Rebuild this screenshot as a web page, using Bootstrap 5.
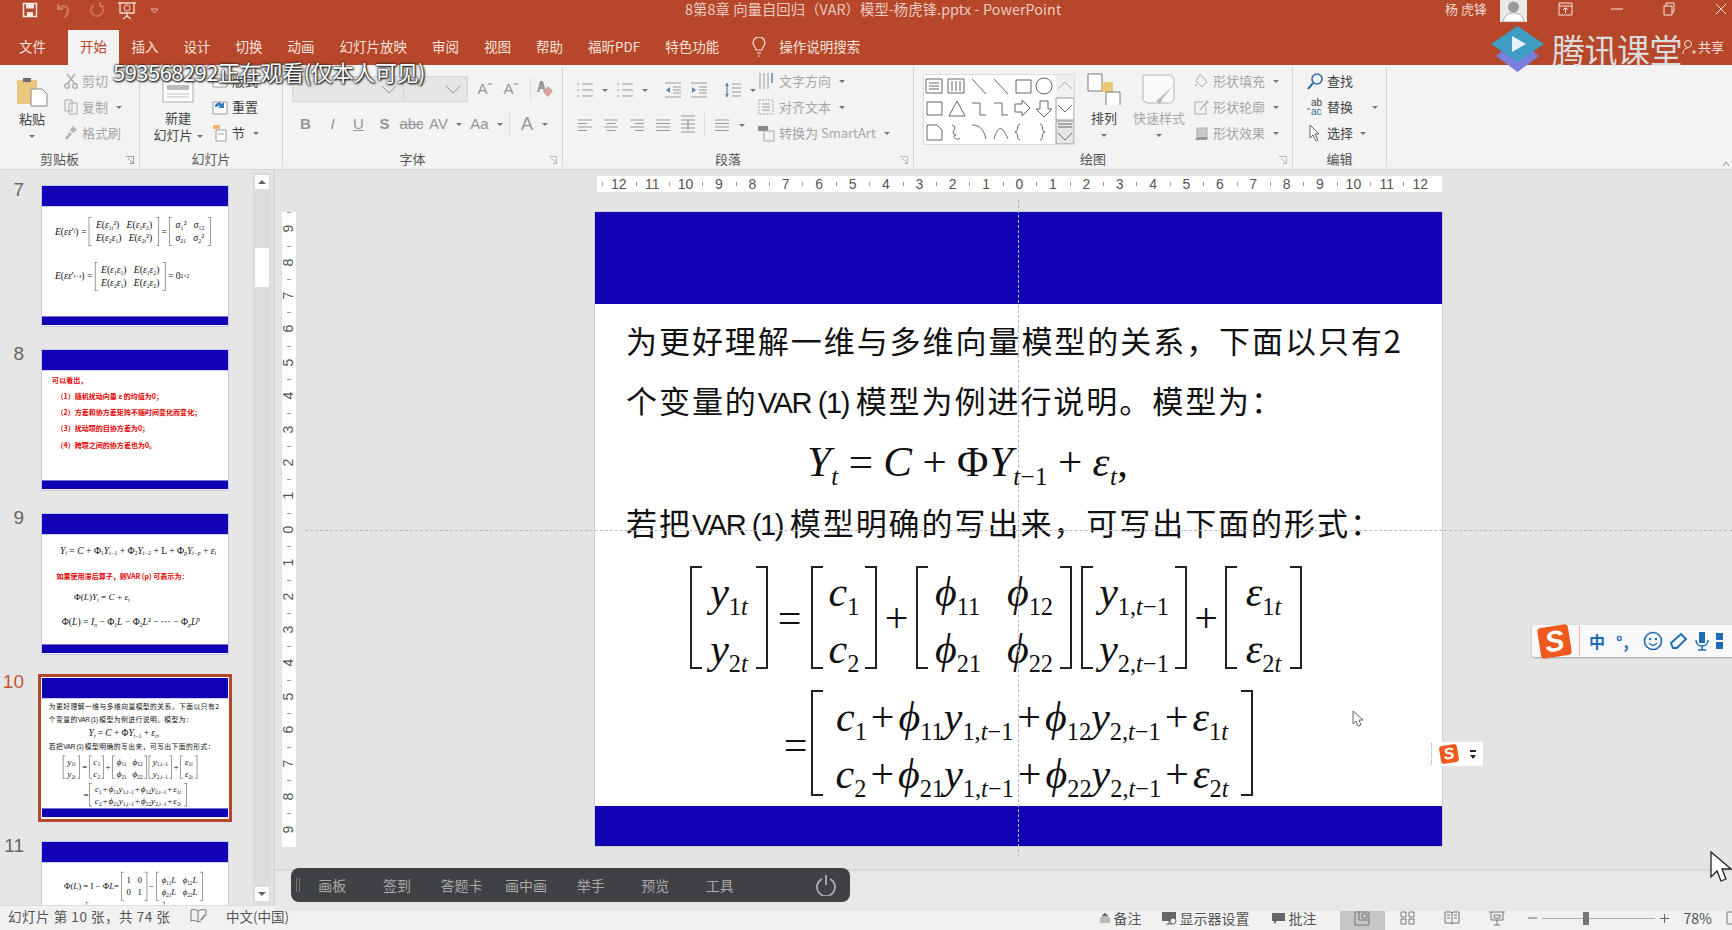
<!DOCTYPE html>
<html lang="zh-CN">
<head>
<meta charset="UTF-8">
<title>PowerPoint</title>
<link href="https://cdn.jsdelivr.net/npm/bootstrap@5.3.0/dist/css/bootstrap.min.css" rel="stylesheet">
<style>
html,body{margin:0;width:1732px;height:930px;overflow:hidden;}
body{position:relative;background:#e4e4e4;color:#444;font-family:"Noto Sans CJK SC","Liberation Sans",sans-serif;font-size:13px;}
svg{display:block;flex:none;}
/* title + tabs */
.app-head{height:65px;background:#b7472a;color:#f0d9d2;position:relative;z-index:5;}
.title-row{height:33px;}
.qa{width:685px;padding:2px 0 0 22px;gap:0;}
.qa-i1{margin-right:17px}.qa-i2{margin-right:16px}.qa-i3{margin-right:11px}.qa-i4{margin-right:13px}
.doc-title{font-size:14.3px;line-height:17px;color:#ecccc3;letter-spacing:.1px;}
.win-ctl{margin-left:auto;margin-right:-15px;}
.who{font-size:13px;line-height:18px;margin-right:13px;color:#f0d9d2;}
.avatar{width:27px;height:22px;background:#e9e9e9;margin-right:12px;}
.wbtn{width:52px;height:18px;display:flex;justify-content:center;align-items:center;}
.tab-row{height:32px;}
.rtab{padding:0 12.5px;line-height:27px;height:27px;font-size:13.5px;color:#f4e3de;white-space:nowrap;}
.rtab-file{padding:0 22px 0 19px;}
.rtab-on{background:#f3f3f3;color:#b7472a;padding:0 12px;height:35px;margin-top:-3px;line-height:33px;}
.rtab-tell{margin-left:8px;}
.tell-txt{padding-left:13px;}
.share{position:absolute;right:8px;top:37px;gap:2px;font-size:13px;line-height:20px;color:#f3e2dd;}
.tencent{position:absolute;left:1491px;top:26px;gap:8px;}
.tencent-name{font-size:33px;line-height:38px;color:#dcdcdc;letter-spacing:-.5px;white-space:nowrap;}
.watch{position:absolute;left:113px;top:56px;font-size:22px;line-height:30px;color:#fff;text-shadow:0 0 2px #111,1px 1px 2px #111,0 0 3px #333;letter-spacing:-.55px;white-space:nowrap;}
/* ribbon */
.ribbon{height:105px;background:#f3f3f3;border-bottom:1px solid #d4d4d4;}
.rb-grp{position:relative;border-right:1px solid #d5d5d5;height:100px;margin-top:2px;display:flex;flex-direction:column;}
.rb-body{height:84px;padding-top:1px;display:flex;}
.rb-lab{height:16px;line-height:16px;text-align:center;font-size:13px;color:#555;position:relative;}
.lab-off{padding-right:20px;}
.launch{position:absolute;right:5px;top:5px;}
.w-clip{width:140px}.w-slide{width:143px}.w-font{width:280px}.w-para{width:351px}.w-draw{width:379px}.w-edit{width:94px}
.rb-big{display:flex;flex-direction:column;align-items:center;text-align:center;line-height:17px;color:#444;}
.big-paste{width:64px;padding-top:7px;}
.big-new{width:68px;padding:11px 0 0 0;margin-left:4px;}
.big-arr{width:52px;padding-top:5px;margin-left:3px;}
.big-quick{width:58px;padding-top:6px;color:#aaa;}
.top-paste{margin-top:3px;}
.top-new{margin-top:6px;}
.top-arr{margin-top:4px;}
.top-quick{margin-top:3px;}
.rb-sm{height:26px;display:flex;align-items:center;gap:4px;white-space:nowrap;line-height:26px;color:#444;}
.off{color:#a6a6a6;}
.caret-d{display:inline-block;width:0;height:0;border-left:3px solid transparent;border-right:3px solid transparent;border-top:3px solid #777;margin-left:4px;vertical-align:middle;}
.font-wrap{padding:9px 0 0 9px;display:block;}
.combo-a,.combo-b{height:26px;background:#e6e6e6;border:1px solid #d5d5d5;display:flex;align-items:center;justify-content:flex-end;padding-right:6px;}
.combo-a{width:112px}.combo-b{width:64px;border-left:0;margin-right:4px;}
.font-row{height:26px;display:flex;align-items:center;}
.row-gap{margin-top:9px;}
.ftool{color:#959595;font-family:"Liberation Sans",sans-serif;font-size:15px;line-height:26px;text-align:center;}
.ft-a{width:26px}.ft-b{width:27px}.ft-c{width:25px}.ft-d{width:22px;font-size:18px}
.ft-sep{width:1px;height:24px;background:#ddd;margin:0 6px;}
.para-l{width:190px;padding:9px 0 0 13px;}
.para-r{padding-left:4px;}
.gap-ic{gap:8px;}
.gallery{width:152px;height:71px;margin:6px 0 0 9px;background:#fff;border:1px solid #dcdcdc;}
.fill-col{padding-left:6px;}
.edit-col{padding-left:13px;}
.edit-col .rb-sm{gap:3px;}
.collapse-mark{margin:auto 3px 3px auto;}
/* work area */
.work{height:735px;}
.side{width:275px;height:735px;border-right:2px solid #d7d7d7;background:#e6e6e6;overflow:hidden;}
.th-col{width:253px;padding-top:16px;overflow:hidden;}
.th-row{display:flex;height:164px;}
.th-num{width:42px;padding:0 18px 0 0;margin-top:-6px;text-align:right;font-size:19px;line-height:20px;color:#666;font-family:"Liberation Sans",sans-serif;}
.th-now .th-num{color:#c4583c;}
.th-box{width:186px;height:140px;overflow:hidden;background:#fff;box-shadow:0 0 0 1px #c9c9f0;}
.th-now .th-box{box-shadow:0 0 0 1px #fff,0 0 0 4px #b5472d;}
.th-in{width:847px;height:634px;transform:scale(.2196);transform-origin:0 0;}
.sbar{width:18px;background:#dcdcdc;margin:2px 0 0;display:flex;flex-direction:column;align-items:center;}
.sb-btn{width:16px;height:16px;margin-top:2px;background:#fff;border:1px solid #ddd;display:flex;align-items:center;justify-content:center;}
.sb-up{border-left:4px solid transparent;border-right:4px solid transparent;border-bottom:4px solid #666;}
.sb-down{border-left:4px solid transparent;border-right:4px solid transparent;border-top:4px solid #666;}
.sb-thumb{width:16px;height:41px;margin-top:57px;background:#fff;border:1px solid #ddd;}
.sb-dn{margin-top:auto;margin-bottom:3px;}
.edit-pane{flex:1;position:relative;}
.canvas{height:693px;}
.ruler-top{height:16px;margin:6px 0 0 322px;width:845px;background:#fff;display:flex;justify-content:center;}
.rcell{width:33.4px;height:16px;position:relative;text-align:center;font-family:"Liberation Sans",sans-serif;font-size:14px;line-height:16px;color:#555;flex:none;}
.rcell::before{content:"";position:absolute;left:0;top:6px;height:4px;width:1px;background:#999;}
.canvas-row{display:flex;margin-top:20px;}
.ruler-left{width:14px;margin-left:7px;height:635px;background:#fff;display:flex;flex-direction:column;justify-content:center;}
.vcell{height:33.4px;width:14px;position:relative;text-align:center;font-family:"Liberation Sans",sans-serif;font-size:14px;line-height:33.4px;color:#555;flex:none;}
.vcell span{display:block;transform:rotate(-90deg);}
.vcell::before{content:"";position:absolute;left:5px;top:0;width:4px;height:1px;background:#999;}
.slide-big{width:847px;height:634px;margin-left:299px;box-shadow:0 0 0 1px #cfcfcf;}
.notes{height:42px;border-top:2px solid #d7d7d7;background:#e8e8e8;}
/* slide */
.sld{background:#fff;color:#111;display:flex;flex-direction:column;width:847px;height:634px;overflow:hidden;}
.band-t{height:92px;background:#1100b4;flex:none;}
.band-b{height:40px;background:#1100b4;margin-top:auto;flex:none;}
.ttl{font-family:"Noto Sans CJK SC","Liberation Sans",sans-serif;font-size:31px;letter-spacing:1.95px;line-height:60px;height:60px;padding-left:31px;white-space:nowrap;}
.ttl-first{margin-top:6px;}
.ttl-var{font-family:"Liberation Sans",sans-serif;font-size:29px;letter-spacing:-1.4px;}
.mth{font-family:"Liberation Serif",serif;font-size:42px;line-height:1;white-space:nowrap;}
.mth i{font-style:italic;}
.sb{font-size:.58em;vertical-align:-.35em;line-height:0;}
.eq1{height:62px;padding-left:212px;display:flex;align-items:center;font-size:43px;letter-spacing:.4px;}
.eq1 .sp{padding:0 10px;}
.mrow{display:flex;align-items:stretch;}
.mrow-a{height:103px;margin:14px 0 0 95px;}
.mrow-b{height:106px;margin:21px 0 0 185px;}
.mrow-a .brk,.mrow-b .brk{padding-top:6px;}
.opr{display:flex;align-items:center;justify-content:center;}
.op-eq{width:43px}.op-pl{width:39px}.op-no{width:9px}.op-pl2{width:38px}.op-eq2{width:31px;padding-top:4px;}
.brk{position:relative;display:flex;flex-direction:column;justify-content:center;align-items:center;}
.brk>div{line-height:57px;}
.brk::before,.brk::after{content:"";position:absolute;top:0;bottom:0;width:12px;border:2px solid #222;}
.brk::before{left:0;border-right:0;}
.brk::after{right:0;border-left:0;}
.br-a{width:78px}.br-b{width:66px}.br-c{width:156px}.br-d{width:106px}.br-e{width:77px}.br-f{width:442px;}
.br-g{width:360px;height:130px;}
.two{display:flex;justify-content:space-between;width:118px;}
.pls{padding:0 4px;}
/* small thumb slides */
.t7a{margin:50px 0 0 59px;height:130px;font-size:44px;}
.t7b{margin:74px 0 0 59px;height:130px;font-size:44px;}
.t-red{color:#e60000;font-weight:700;font-size:32px;line-height:73px;white-space:nowrap;}
.t8a{margin:10px 0 0 46px;height:73px;}
.t8b{padding-left:66px;height:73px;}
.t9a{margin:52px 0 0 82px;height:56px;font-size:44px;}
.t9b{margin:58px 0 0 66px;}
.t9c{margin:50px 0 0 146px;font-size:42px;}
.t9d{margin:72px 0 0 90px;font-size:44px;}
.t11a{margin:44px 0 0 100px;font-size:40px;height:130px;}
.t11b{margin:7px 0 0 200px;}
/* status */
.status{height:25px;background:#f1f1f1;border-top:1px solid #dcdcdc;color:#555;line-height:20px;font-size:13.5px;}
.st-left{padding-left:8px;width:190px;white-space:nowrap;letter-spacing:.55px;}
.st-icon{margin-top:3px;}
.st-lang{margin-left:19px;font-size:13.5px;}
.st-right{margin-left:auto;margin-right:-8px;height:24px;font-size:14px;}
.st-item{gap:3px;white-space:nowrap;}
.st-note{margin-right:19px;}
.st-disp{margin-right:21px;}
.st-cmt{margin-right:23px;}
.vw{width:45px;height:24px;display:flex;align-items:center;justify-content:center;}
.vw-on{background:#c6c6c6;}
.zoom-minus{margin-left:8px;}
.zoom-track{width:113px;height:1px;background:#aaa;margin:0 5px;position:relative;}
.zoom-thumb{position:absolute;left:41px;top:-6px;width:6px;height:13px;background:#777;}
.zoom-val{margin:0 14px 0 15px;font-size:14px;}
/* overlays */
.guide-v{position:absolute;left:1018px;top:200px;height:657px;border-left:1px dashed #b9b9b9;}
.guide-h{position:absolute;left:305px;right:0;top:530px;border-top:1px dashed #b9b9b9;}
.class-bar{position:absolute;left:291px;top:868px;width:559px;height:34px;background:#3f4144;border-radius:8px;color:#a9a9a9;font-size:14px;}
.cb-grip{width:4px;height:14px;border-left:1px solid #777;border-right:1px solid #777;margin:0 0 0 5px;}
.cb-it{width:64.6px;text-align:center;line-height:34px;flex:none;}
.cb-pow{margin-left:auto;margin-right:13px;}
.ime{position:absolute;left:1532px;top:625px;width:210px;height:32px;background:#f8f9fb;border-radius:3px 0 0 3px;box-shadow:0 1px 2px #9aa4b4;padding-left:7px;color:#1c6cb5;}
.sg-logo{display:flex;align-items:center;justify-content:center;background:#ef5a1c;color:#fff;font-family:"Liberation Sans",sans-serif;font-weight:700;font-style:italic;transform:rotate(-9deg);}
.sg-big{width:31px;height:31px;border-radius:4px;font-size:29px;margin-right:9px;}
.sg-sm{width:18px;height:18px;border-radius:3px;font-size:16px;}
.ime-sep{width:1px;height:30px;background:#f4b8a0;margin-right:9px;}
.ime-zh{font-size:16px;font-weight:700;width:27px;line-height:32px;}
.ime-dot{font-size:16px;font-weight:700;width:27px;line-height:24px;letter-spacing:1px;}
.ime-i{margin-right:7px;}
.ime-sm{position:absolute;left:1425px;top:742px;width:58px;height:24px;background:#fff;padding-left:15px;gap:12px;}
.ime-sm-grip{position:absolute;left:6px;top:1px;height:22px;border-left:1px dotted #aaa;}
.updn{width:6px;}
.updn b{display:block;width:6px;height:2px;background:#222;margin-bottom:3px;}
.updn u{display:block;width:0;height:0;border-left:3px solid transparent;border-right:3px solid transparent;border-top:4px solid #222;}
.cur-a{position:absolute;left:1352px;top:710px;}
.cur-b{position:absolute;left:1710px;top:851px;}
</style>
</head>
<body>
<svg width="0" height="0" class="position-absolute">
  <symbol id="l-bul" viewBox="0 0 18 18"><g fill="none" stroke="#999" stroke-width="1.2"><path d="M6 3h11M6 9h11M6 15h11M1 3h2M1 9h2M1 15h2"/></g></symbol>
  <symbol id="l-ind-l" viewBox="0 0 18 18"><g fill="none" stroke="#999" stroke-width="1.2"><path d="M1 2h16M9 6h8M9 9h8M9 12h8M1 16h16"/></g><path d="M6 6v6L2 9z" fill="#5b86b5"/></symbol>
  <symbol id="l-ind-r" viewBox="0 0 18 18"><g fill="none" stroke="#999" stroke-width="1.2"><path d="M1 2h16M9 6h8M9 9h8M9 12h8M1 16h16"/></g><path d="M2 6v6l4-3z" fill="#5b86b5"/></symbol>
  <symbol id="l-sp" viewBox="0 0 18 18"><g fill="none" stroke="#999" stroke-width="1.2"><path d="M8 3h9M8 7h9M8 11h9M8 15h9"/><path d="M3 2v14" stroke="#5b86b5"/></g><path d="M1 5l2-3 2 3zM1 13l2 3 2-3z" fill="#5b86b5"/></symbol>
  <symbol id="a-l" viewBox="0 0 16 14"><path d="M1 2h14M1 5.500h9M1 9h14M1 12.500h9" stroke="#999" stroke-width="1.100"/></symbol>
  <symbol id="a-c" viewBox="0 0 16 14"><path d="M1 2h14M3.500 5.500h9M1 9h14M3.500 12.500h9" stroke="#999" stroke-width="1.100"/></symbol>
  <symbol id="a-r" viewBox="0 0 16 14"><path d="M1 2h14M6 5.500h9M1 9h14M6 12.500h9" stroke="#999" stroke-width="1.100"/></symbol>
  <symbol id="a-j" viewBox="0 0 16 14"><path d="M1 2h14M1 5.500h14M1 9h14M1 12.500h14" stroke="#999" stroke-width="1.100"/></symbol>
  <symbol id="a-d" viewBox="0 0 16 20"><path d="M1 1h14M1 5h14M1 9h14M1 13h14M1 17h14" stroke="#999" stroke-width="1.100"/><path d="M8 5v10" stroke="#888"/></symbol>
</svg>

<div class="app-head">
  <div class="title-row d-flex">
    <div class="qa d-flex">
      <svg class="qa-i1" width="16" height="16" viewBox="0 0 16 16"><path d="M1.500 1.500h13v13h-13z" fill="none" stroke="#f3e6e2" stroke-width="1.500"/><path d="M4 1.500h8v5H4zM5 10h6v4.500H5z" fill="#f3e6e2"/></svg>
      <svg class="qa-i2" width="17" height="16" viewBox="0 0 17 16"><path d="M3 7c3-4 10-4 10 2 0 3-2 5-4 6M3 2v5h5" fill="none" stroke="#cf7a62" stroke-width="2"/></svg>
      <svg class="qa-i3" width="18" height="16" viewBox="0 0 18 16"><path d="M12 3a6 6 0 1 1-6 0M12 0v4h4" fill="none" stroke="#cf7a62" stroke-width="1.600"/></svg>
      <svg class="qa-i4" width="20" height="18" viewBox="0 0 20 18"><path d="M1 1h18M3 1v10h14V1M10 11v3M6 17l4-3 4 3" fill="none" stroke="#f0d9d2" stroke-width="1.300"/><circle cx="10" cy="6" r="3" fill="none" stroke="#f0d9d2"/></svg>
      <svg width="9" height="16" viewBox="0 0 9 16"><path d="M1 7h7L4.500 11z" fill="none" stroke="#e2b4a7"/></svg>
    </div>
    <div class="doc-title text-nowrap">8第8章 向量自回归（VAR）模型-杨虎锋.pptx - PowerPoint</div>
    <div class="win-ctl d-flex">
      <div class="who">杨 虎锋</div>
      <div class="avatar"><svg width="27" height="22" viewBox="0 0 27 22"><circle cx="13.500" cy="7" r="5.500" fill="#9b9b9b"/><path d="M3 22c1-7 6-9 10.500-9S23 15 24 22z" fill="#fff" stroke="#aaa"/></svg></div>
      <div class="wbtn"><svg width="15" height="14" viewBox="0 0 15 14"><path d="M1 1h13v12H1zM1 4h13M7.500 11V6M5 8l2.500-2.500L10 8" fill="none" stroke="#f3e6e2"/></svg></div>
      <div class="wbtn"><svg width="12" height="2" viewBox="0 0 12 2"><path d="M0 1h12" stroke="#f3e6e2"/></svg></div>
      <div class="wbtn"><svg width="12" height="14" viewBox="0 0 12 14"><path d="M1 4h8v9H1zM3 4V1h8v9H9" fill="none" stroke="#f3e6e2"/></svg></div>
      <div class="wbtn"><svg width="12" height="12" viewBox="0 0 12 12"><path d="M1 1l10 10M11 1L1 11" stroke="#f3e6e2"/></svg></div>
    </div>
  </div>
  <div class="tab-row d-flex">
    <div class="rtab rtab-file">文件</div>
    <div class="rtab rtab-on">开始</div>
    <div class="rtab">插入</div>
    <div class="rtab">设计</div>
    <div class="rtab">切换</div>
    <div class="rtab">动画</div>
    <div class="rtab">幻灯片放映</div>
    <div class="rtab">审阅</div>
    <div class="rtab">视图</div>
    <div class="rtab">帮助</div>
    <div class="rtab">福昕PDF</div>
    <div class="rtab">特色功能</div>
    <div class="rtab rtab-tell d-flex align-items-center">
      <svg width="14" height="20" viewBox="0 0 14 20"><path d="M4 13c0-3-3-4-3-7a6 6 0 0 1 12 0c0 3-3 4-3 7zM5 16h4M6 19h2" fill="none" stroke="#f4e3de" stroke-width="1.200"/></svg>
      <span class="tell-txt">操作说明搜索</span>
    </div>
  </div>
  <div class="tencent d-flex align-items-center">
    <svg width="53" height="46" viewBox="0 0 53 46"><path d="M26.500 12L48 30 26.500 46 5 30z" fill="#7a7fdc"/><path d="M26.500 0L53 18 26.500 36 0 18z" fill="#3f9cc4"/><path d="M21 10l14 8-14 8z" fill="#e6f3f8"/></svg>
    <div class="tencent-name">腾讯课堂</div>
  </div>
  <div class="share d-flex align-items-center">
    <svg width="14" height="16" viewBox="0 0 14 16"><circle cx="6" cy="5" r="3.500" fill="none" stroke="#f3e2dd"/><path d="M1 15c0-4 2-6 5-6M10 13h4M12 11v4" fill="none" stroke="#f3e2dd"/></svg>共享
  </div>
  <div class="watch">593568292正在观看(仅本人可见)</div>
</div>

<div class="ribbon d-flex">
  <div class="rb-grp w-clip">
    <div class="rb-body">
      <div class="rb-big big-paste">
        <svg width="32" height="32" viewBox="0 0 32 32"><path d="M1 5h20v24H1z" fill="#ecc67c"/><path d="M7 3h8v4H7z" fill="#6d6d6d"/><path d="M15 14h11l5 5v12H15z" fill="#fff" stroke="#888"/></svg>
        <div class="top-paste">粘贴</div>
        <i class="caret-d m-0 mt-2"></i>
      </div>
      <div class="d-flex flex-column">
        <div class="rb-sm off"><svg width="14" height="16" viewBox="0 0 14 16"><path d="M3 1l8 10M11 1L3 11" stroke="#aaa" stroke-width="1.300"/><circle cx="3" cy="13" r="2.300" fill="none" stroke="#aaa" stroke-width="1.300"/><circle cx="11" cy="13" r="2.300" fill="none" stroke="#aaa" stroke-width="1.300"/></svg>剪切</div>
        <div class="rb-sm off"><svg width="14" height="16" viewBox="0 0 14 16"><path d="M1 1h7v11H1zM5 4h8v11H5z" fill="#f3f3f3" stroke="#aaa"/></svg>复制<i class="caret-d"></i></div>
        <div class="rb-sm off"><svg width="14" height="16" viewBox="0 0 14 16"><path d="M9 1l4 4-4 3-3-3zM6 7l2 2-5 6-2-2z" fill="#b5b5b5"/></svg>格式刷</div>
      </div>
    </div>
    <div class="rb-lab lab-off">剪贴板<svg class="launch" width="8" height="8" viewBox="0 0 8 8"><path d="M0 .5h7.500V8M2 2l5 5M4 7.500h3.500V4" fill="none" stroke="#999"/></svg></div>
  </div>
  <div class="rb-grp w-slide">
    <div class="rb-body">
      <div class="rb-big big-new">
        <svg width="32" height="24" viewBox="0 0 32 24"><path d="M1 1h30v22H1z" fill="#fff" stroke="#aaa"/><path d="M5 6h22v5H5z" fill="#bbb"/><path d="M5 15h22M5 18h22" stroke="#bbb"/></svg>
        <div class="top-new">新建</div>
        <div class="text-nowrap">幻灯片<i class="caret-d"></i></div>
      </div>
      <div class="d-flex flex-column">
        <div class="rb-sm"><svg width="16" height="14" viewBox="0 0 16 14"><path d="M1 1h14v12H1z" fill="#fff" stroke="#999"/><path d="M3 3h10v3H3z" fill="#ccc"/></svg>版式<i class="caret-d"></i></div>
        <div class="rb-sm"><svg width="16" height="16" viewBox="0 0 16 16"><path d="M1 3h14v12H1z" fill="#fff" stroke="#999"/><path d="M3 8a4 4 0 0 1 7-3l2-2v6H6l2-2a2 2 0 0 0-3 1z" fill="#2f7cc0"/></svg>重置</div>
        <div class="rb-sm"><svg width="16" height="18" viewBox="0 0 16 18"><path d="M1 1h7v4H1z" fill="#eeb96b"/><path d="M4 6h10v11H4z" fill="#fff" stroke="#999"/><path d="M6 10h6" stroke="#999"/></svg>节<i class="caret-d"></i></div>
      </div>
    </div>
    <div class="rb-lab">幻灯片</div>
  </div>
  <div class="rb-grp w-font">
    <div class="rb-body font-wrap">
      <div class="font-row">
        <div class="combo-a"><svg width="16" height="9" viewBox="0 0 16 9"><path d="M1 1l7 7 7-7" fill="none" stroke="#999"/></svg></div>
        <div class="combo-b"><svg width="16" height="9" viewBox="0 0 16 9"><path d="M1 1l7 7 7-7" fill="none" stroke="#999"/></svg></div>
        <div class="ftool ft-a">Aˆ</div><div class="ftool ft-a">Aˇ</div>
        <div class="ft-sep"></div>
        <svg width="17" height="18" viewBox="0 0 17 18"><path d="M3 1L0 12h2l1-3h3l1 3h2L6 1z" fill="#999"/><path d="M11 6l5 5-5 6-5-5z" fill="#d9a0a0"/></svg>
      </div>
      <div class="font-row row-gap">
        <div class="ftool ft-b fw-bold">B</div><div class="ftool ft-b fst-italic">I</div><div class="ftool ft-c text-decoration-underline">U</div><div class="ftool ft-b fw-bold">S</div>
        <div class="ftool ft-b text-decoration-line-through">abc</div>
        <div class="ftool ft-b">AV</div>
        <i class="caret-d me-1"></i>
        <div class="ftool ft-b">Aa</div><i class="caret-d"></i>
        <div class="ft-sep"></div>
        <div class="ftool ft-d">A</div><i class="caret-d"></i>
      </div>
    </div>
    <div class="rb-lab lab-off">字体<svg class="launch" width="8" height="8" viewBox="0 0 8 8"><path d="M0 .5h7.500V8M2 2l5 5M4 7.500h3.500V4" fill="none" stroke="#bbb"/></svg></div>
  </div>
  <div class="rb-grp w-para">
    <div class="rb-body">
      <div class="para-l">
        <div class="font-row gap-ic">
          <svg width="18" height="18"><use href="#l-bul"/></svg><i class="caret-d m-0"></i>
          <svg width="18" height="18"><use href="#l-bul"/></svg><i class="caret-d m-0"></i>
          <div class="ft-sep m-0"></div>
          <svg width="18" height="18"><use href="#l-ind-l"/></svg>
          <svg width="18" height="18"><use href="#l-ind-r"/></svg>
          <div class="ft-sep m-0"></div>
          <svg width="18" height="18"><use href="#l-sp"/></svg><i class="caret-d m-0"></i>
        </div>
        <div class="font-row row-gap gap-ic">
          <svg width="18" height="14"><use href="#a-l"/></svg>
          <svg width="18" height="14"><use href="#a-c"/></svg>
          <svg width="18" height="14"><use href="#a-r"/></svg>
          <svg width="18" height="14"><use href="#a-j"/></svg>
          <svg width="16" height="20"><use href="#a-d"/></svg>
          <div class="ft-sep m-0"></div>
          <svg width="18" height="14"><use href="#a-j"/></svg><i class="caret-d m-0"></i>
        </div>
      </div>
      <div class="d-flex flex-column para-r">
        <div class="rb-sm off"><svg width="18" height="18" viewBox="0 0 18 18"><path d="M3 1v16M7 1v16M11 1v16" stroke="#999"/><path d="M15 1v10" stroke="#5b86b5" stroke-width="1.500"/></svg>文字方向<i class="caret-d"></i></div>
        <div class="rb-sm off"><svg width="18" height="18" viewBox="0 0 18 18"><path d="M2 2h14v14H2z" fill="none" stroke="#aaa" stroke-dasharray="2 1"/><path d="M5 6h8M5 9h8M5 12h8" stroke="#999"/></svg>对齐文本<i class="caret-d"></i></div>
        <div class="rb-sm off"><svg width="18" height="18" viewBox="0 0 18 18"><path d="M1 2h10v5H1z" fill="#888"/><path d="M7 7h10v10H7z" fill="#f3f3f3" stroke="#aaa"/></svg>转换为 SmartArt<i class="caret-d"></i></div>
      </div>
    </div>
    <div class="rb-lab lab-off">段落<svg class="launch" width="8" height="8" viewBox="0 0 8 8"><path d="M0 .5h7.500V8M2 2l5 5M4 7.500h3.500V4" fill="none" stroke="#bbb"/></svg></div>
  </div>
  <div class="rb-grp w-draw">
    <div class="rb-body">
      <div class="gallery">
        <svg width="150" height="69" viewBox="0 0 150 69"><g fill="none" stroke="#666" stroke-width="1">
          <path d="M2 4h16v14H2zM5 8h10M5 11h10M5 14h10"/><path d="M24 4h16v14H24zM28 6v10M32 6v10M36 6v10"/>
          <path d="M48 4l14 15M70 4l14 15M92 5h15v13H92z"/><circle cx="120" cy="11" r="8"/>
          <path d="M3 27h15a2 2 0 0 1 0 0v13H3zM33 26l8 15H25zM48 28h8v12h6M70 28h8v12h6M91 29h7v-4l8 8-8 8v-4h-7zM116 26h8v8h4l-8 8-8-8h4z"/>
          <path d="M3 50h10l5 5v10H3zM28 50c8 2-4 8 4 10-6 2 2 6 4 3M48 50c8 0 12 5 14 14M70 64c4-14 8-14 14 0M96 49c-4 0-1 8-5 8 4 0 1 8 5 8M116 49c4 0 1 8 5 8-4 0-1 8-5 8"/>
        </g>
        <path d="M132 0h18v69h-18z" fill="#f0f0f0"/><path d="M134 14l7-7 7 7" fill="none" stroke="#aaa"/><path d="M132 23h18v22h-18z" fill="#fff" stroke="#999"/><path d="M134 30l7 7 7-7" fill="none" stroke="#666"/><path d="M132 46h18v23h-18z" fill="#e6e6e6" stroke="#999"/><path d="M134 49h14M134 52h14M134 58l7 7 7-7" fill="none" stroke="#666"/></svg>
      </div>
      <div class="rb-big big-arr">
        <svg width="34" height="32" viewBox="0 0 34 32"><path d="M1 1h14v17H1z" fill="#fff" stroke="#777"/><path d="M15 9h11v10H15z" fill="#eec876"/><path d="M19 19h14v14H19z" fill="#fff" stroke="#777"/></svg>
        <div class="top-arr">排列</div>
        <i class="caret-d m-0 mt-2"></i>
      </div>
      <div class="rb-big big-quick">
        <svg width="36" height="32" viewBox="0 0 36 32"><path d="M2 1h26a5 5 0 0 1 5 5v18a5 5 0 0 1-5 5H7a5 5 0 0 1-5-5z" fill="#fafafa" stroke="#ccc" stroke-width="1.500"/><path d="M33 11L22 24l-3 6-4-3 5-4z" fill="#b9b9b9"/></svg>
        <div class="top-quick text-nowrap">快速样式</div>
        <i class="caret-d m-0 mt-2"></i>
      </div>
      <div class="d-flex flex-column fill-col">
        <div class="rb-sm off"><svg width="15" height="16" viewBox="0 0 15 16"><path d="M6 1l7 8-5 5-6-6z" fill="none" stroke="#aaa"/><path d="M1 13l1-3 1 3z" fill="#aaa"/></svg>形状填充<i class="caret-d"></i></div>
        <div class="rb-sm off"><svg width="15" height="16" viewBox="0 0 15 16"><path d="M1 3h8M1 3v12h11V8" fill="none" stroke="#aaa"/><path d="M13 1L6 10l-1 2 2-1 8-8z" fill="#bbb"/></svg>形状轮廓<i class="caret-d"></i></div>
        <div class="rb-sm off"><svg width="15" height="16" viewBox="0 0 15 16"><path d="M3 3h10v10H3z" fill="#c9c9c9" stroke="#aaa"/><path d="M1 14l3-2h10l-1 3H2z" fill="#999"/></svg>形状效果<i class="caret-d"></i></div>
      </div>
    </div>
    <div class="rb-lab lab-off">绘图<svg class="launch" width="8" height="8" viewBox="0 0 8 8"><path d="M0 .5h7.500V8M2 2l5 5M4 7.500h3.500V4" fill="none" stroke="#bbb"/></svg></div>
  </div>
  <div class="rb-grp w-edit">
    <div class="rb-body">
      <div class="d-flex flex-column edit-col">
        <div class="rb-sm"><svg width="18" height="18" viewBox="0 0 18 18"><circle cx="11" cy="7" r="5" fill="none" stroke="#2b6ea8" stroke-width="1.600"/><path d="M7 11l-5 6" stroke="#2b6ea8" stroke-width="2"/></svg>查找</div>
        <div class="rb-sm"><svg width="18" height="18" viewBox="0 0 18 18"><text x="5" y="8" font-size="10" fill="#444" font-family="Liberation Sans">ab</text><text x="5" y="17" font-size="10" fill="#2b6ea8" font-family="Liberation Sans">ac</text><path d="M1 11h3" stroke="#2b6ea8"/></svg>替换<i class="caret-d ms-3"></i></div>
        <div class="rb-sm"><svg width="18" height="18" viewBox="0 0 18 18"><path d="M4 1v13l3-3 3 6 2-1-3-6h4z" fill="#fff" stroke="#666"/></svg>选择<i class="caret-d"></i></div>
      </div>
    </div>
    <div class="rb-lab">编辑</div>
  </div>
  <svg class="collapse-mark" width="6" height="5" viewBox="0 0 6 5"><path d="M0 5l3-4 3 4" fill="none" stroke="#888"/></svg>
</div>

<div class="work d-flex">
  <div class="side d-flex">
    <div class="th-col">
      <div class="th-row">
        <div class="th-num">7</div>
        <div class="th-box"><div class="th-in"><div class="sld">
          <div class="band-t"></div>
          <div class="mth mrow t7a"><span class="opr"><i>E</i>(<i>εε</i>′<span class="sb"><i>t</i></span>)&nbsp;=&nbsp;</span><div class="brk px-4"><div class="px-2"><i>E</i>(<i>ε</i><span class="sb">1<i>t</i></span>²) &nbsp; <i>E</i>(<i>ε</i><span class="sb">1</span><i>ε</i><span class="sb">2</span>)</div><div class="px-2"><i>E</i>(<i>ε</i><span class="sb">2</span><i>ε</i><span class="sb">1</span>) &nbsp; <i>E</i>(<i>ε</i><span class="sb">2<i>t</i></span>²)</div></div><span class="opr">&nbsp;=&nbsp;</span><div class="brk px-4"><div class="px-1"><i>σ</i>₁² &nbsp; <i>σ</i><span class="sb">12</span></div><div class="px-1"><i>σ</i><span class="sb">21</span> &nbsp; <i>σ</i>₂²</div></div></div>
          <div class="mth mrow t7b"><span class="opr"><i>E</i>(<i>εε</i>′<span class="sb"><i>t−s</i></span>)&nbsp;=&nbsp;</span><div class="brk px-4"><div class="px-1"><i>E</i>(<i>ε</i><span class="sb">1</span><i>ε</i><span class="sb">1</span>) &nbsp; <i>E</i>(<i>ε</i><span class="sb">1</span><i>ε</i><span class="sb">2</span>)</div><div class="px-1"><i>E</i>(<i>ε</i><span class="sb">2</span><i>ε</i><span class="sb">1</span>) &nbsp; <i>E</i>(<i>ε</i><span class="sb">2</span><i>ε</i><span class="sb">2</span>)</div></div><span class="opr">&nbsp;= 0<span class="sb">2×2</span></span></div>
          <div class="band-b"></div>
        </div></div></div>
      </div>
      <div class="th-row">
        <div class="th-num">8</div>
        <div class="th-box"><div class="th-in"><div class="sld">
          <div class="band-t"></div>
          <div class="t-red t8a">可以看出，</div>
          <div class="t-red t8b">（1）随机扰动向量 ε 的均值为0；</div>
          <div class="t-red t8b">（2）方差和协方差矩阵不随时间变化而变化；</div>
          <div class="t-red t8b">（3）扰动项的自协方差为0；</div>
          <div class="t-red t8b">（4）跨项之间的协方差也为0。</div>
          <div class="band-b"></div>
        </div></div></div>
      </div>
      <div class="th-row">
        <div class="th-num">9</div>
        <div class="th-box"><div class="th-in"><div class="sld">
          <div class="band-t"></div>
          <div class="mth t9a"><i>Y<span class="sb">t</span></i> = <i>C</i> + Φ<span class="sb">1</span><i>Y<span class="sb">t−1</span></i> + Φ<span class="sb">2</span><i>Y<span class="sb">t−2</span></i> + L + Φ<span class="sb"><i>p</i></span><i>Y<span class="sb">t−p</span></i> + <i>ε<span class="sb">t</span></i></div>
          <div class="t-red t9b lh-base">如果使用滞后算子，则VAR (p) 可表示为：</div>
          <div class="mth t9c">Φ(<i>L</i>)<i>Y<span class="sb">t</span></i> = <i>C</i> + <i>ε<span class="sb">t</span></i></div>
          <div class="mth t9d">Φ(<i>L</i>) = <i>I<span class="sb">n</span></i> − Φ<span class="sb">1</span><i>L</i> − Φ<span class="sb">2</span><i>L</i>² − ⋯ − Φ<span class="sb"><i>p</i></span><i>L<sup>p</sup></i></div>
          <div class="band-b"></div>
        </div></div></div>
      </div>
      <div class="th-row th-now">
        <div class="th-num">10</div>
        <div class="th-box"><div class="th-in" id="thumbNow"></div></div>
      </div>
      <div class="th-row">
        <div class="th-num">11</div>
        <div class="th-box"><div class="th-in"><div class="sld">
          <div class="band-t"></div>
          <div class="mth mrow t11a"><span class="opr">Φ(<i>L</i>) = I − Φ<i>L</i> =&nbsp;</span><div class="brk px-4"><div>1 &nbsp; 0</div><div>0 &nbsp; 1</div></div><span class="opr">&nbsp;−&nbsp;</span><div class="brk px-4"><div><i>ϕ</i><span class="sb">11</span><i>L</i> &nbsp; <i>ϕ</i><span class="sb">12</span><i>L</i></div><div><i>ϕ</i><span class="sb">21</span><i>L</i> &nbsp; <i>ϕ</i><span class="sb">22</span><i>L</i></div></div></div>
          <div class="mrow t11b"><div class="brk br-g"></div></div>
          <div class="band-b"></div>
        </div></div></div>
      </div>
    </div>
    <div class="sbar">
      <div class="sb-btn"><span class="sb-up"></span></div>
      <div class="sb-thumb"></div>
      <div class="sb-btn sb-dn"><span class="sb-down"></span></div>
    </div>
  </div>
  <div class="edit-pane">
    <div class="canvas">
      <div class="ruler-top" id="rulerTop"></div>
      <div class="canvas-row">
        <div class="ruler-left" id="rulerLeft"></div>
        <div class="slide-big">
          <div class="sld" id="mainSlide">
            <div class="band-t"></div>
            <div class="ttl ttl-first">为更好理解一维与多维向量模型的关系，下面以只有2</div>
            <div class="ttl">个变量的<span class="ttl-var">VAR (1) </span>模型为例进行说明。模型为：</div>
            <div class="mth eq1"><span><i>Y</i><span class="sb"><i>t</i></span></span><span class="sp">=</span><i>C</i><span class="sp">+</span><span>Φ<i>Y</i><span class="sb"><i>t</i>−1</span></span><span class="sp">+</span><span><i>ε</i><span class="sb"><i>t</i></span>,</span></div>
            <div class="ttl">若把<span class="ttl-var">VAR (1) </span>模型明确的写出来，可写出下面的形式：</div>
            <div class="mth mrow mrow-a">
              <div class="brk br-a"><div><i>y</i><span class="sb">1<i>t</i></span></div><div><i>y</i><span class="sb">2<i>t</i></span></div></div>
              <div class="opr op-eq">=</div>
              <div class="brk br-b"><div><i>c</i><span class="sb">1</span></div><div><i>c</i><span class="sb">2</span></div></div>
              <div class="opr op-pl">+</div>
              <div class="brk br-c"><div class="two"><span><i>ϕ</i><span class="sb">11</span></span><span><i>ϕ</i><span class="sb">12</span></span></div><div class="two"><span><i>ϕ</i><span class="sb">21</span></span><span><i>ϕ</i><span class="sb">22</span></span></div></div>
              <div class="opr op-no"></div>
              <div class="brk br-d"><div><i>y</i><span class="sb">1,<i>t</i>−1</span></div><div><i>y</i><span class="sb">2,<i>t</i>−1</span></div></div>
              <div class="opr op-pl2">+</div>
              <div class="brk br-e"><div><i>ε</i><span class="sb">1<i>t</i></span></div><div><i>ε</i><span class="sb">2<i>t</i></span></div></div>
            </div>
            <div class="mth mrow mrow-b">
              <div class="opr op-eq2">=</div>
              <div class="brk br-f">
                <div><i>c</i><span class="sb">1</span><span class="pls">+</span><i>ϕ</i><span class="sb">11</span><i>y</i><span class="sb">1,<i>t</i>−1</span><span class="pls">+</span><i>ϕ</i><span class="sb">12</span><i>y</i><span class="sb">2,<i>t</i>−1</span><span class="pls">+</span><i>ε</i><span class="sb">1<i>t</i></span></div>
                <div><i>c</i><span class="sb">2</span><span class="pls">+</span><i>ϕ</i><span class="sb">21</span><i>y</i><span class="sb">1,<i>t</i>−1</span><span class="pls">+</span><i>ϕ</i><span class="sb">22</span><i>y</i><span class="sb">2,<i>t</i>−1</span><span class="pls">+</span><i>ε</i><span class="sb">2<i>t</i></span></div>
              </div>
            </div>
            <div class="band-b"></div>
          </div>
        </div>
      </div>
    </div>
    <div class="notes"></div>
  </div>
</div>

<div class="status d-flex">
  <div class="st-left">幻灯片 第 10 张，共 74 张</div>
  <svg class="st-icon" width="17" height="14" viewBox="0 0 17 14"><path d="M1 1c3-1 5 0 7 1v11c-2-1-4-2-7-1zM8 2c2-1 4-2 8-1v6M8 13l3-1" fill="none" stroke="#777"/><path d="M15 6l-4 5" stroke="#777" stroke-width="1.500"/></svg>
  <div class="st-lang">中文(中国)</div>
  <div class="st-right d-flex align-items-center">
    <div class="st-item d-flex align-items-center st-note"><svg width="12" height="10" viewBox="0 0 12 10"><path d="M6 0l3 3H3zM1 5h10M1 7h10M1 9h10" fill="#666" stroke="#666" stroke-width=".8"/></svg>备注</div>
    <div class="st-item d-flex align-items-center st-disp"><svg width="16" height="14" viewBox="0 0 16 14"><path d="M1 1h14v9H1z" fill="#666"/><path d="M5 13h6M8 10v3" stroke="#666"/><circle cx="12" cy="10" r="3" fill="#f1f1f1" stroke="#666"/></svg>显示器设置</div>
    <div class="st-item d-flex align-items-center st-cmt"><svg width="15" height="13" viewBox="0 0 15 13"><path d="M1 1h13v8H6l-3 3V9H1z" fill="#666"/></svg>批注</div>
    <div class="vw vw-on"><svg width="16" height="15" viewBox="0 0 16 15"><path d="M1 1h14v13H1zM5 1v8M5 9h10M8 3h5v4H8z" fill="none" stroke="#777"/></svg></div>
    <div class="vw"><svg width="15" height="14" viewBox="0 0 15 14"><path d="M1 1h5v5H1zM9 1h5v5H9zM1 8h5v5H1zM9 8h5v5H9z" fill="none" stroke="#777"/></svg></div>
    <div class="vw"><svg width="16" height="14" viewBox="0 0 16 14"><path d="M1 1h6l1 1 1-1h6v11H9l-1 1-1-1H1zM8 2v10M3 4h3M3 7h3M10 4h3M10 7h3" fill="none" stroke="#777"/></svg></div>
    <div class="vw"><svg width="16" height="15" viewBox="0 0 16 15"><path d="M0 1h16M2 1v8h12V1M8 9v5M5 14h6M5 4h6v3H5z" fill="none" stroke="#777"/></svg></div>
    <svg class="zoom-minus" width="9" height="2" viewBox="0 0 9 2"><path d="M0 1h9" stroke="#666"/></svg>
    <div class="zoom-track"><div class="zoom-thumb"></div></div>
    <svg width="9" height="9" viewBox="0 0 9 9"><path d="M0 4.500h9M4.500 0v9" stroke="#666"/></svg>
    <div class="zoom-val">78%</div>
    <svg width="14" height="14" viewBox="0 0 14 14"><path d="M1 1h12v12H1z" fill="none" stroke="#777"/></svg>
  </div>
</div>

<div class="guide-v"></div>
<div class="guide-h"></div>

<div class="class-bar d-flex align-items-center">
  <div class="cb-grip"></div>
  <div class="cb-it">画板</div><div class="cb-it">签到</div><div class="cb-it">答题卡</div><div class="cb-it">画中画</div><div class="cb-it">举手</div><div class="cb-it">预览</div><div class="cb-it">工具</div>
  <svg class="cb-pow" width="22" height="22" viewBox="0 0 22 22"><path d="M7 5a9 9 0 1 0 8 0M11 1v10" fill="none" stroke="#aeb0b2" stroke-width="1.800"/></svg>
</div>

<div class="ime d-flex align-items-center">
  <div class="sg-logo sg-big">S</div>
  <div class="ime-sep"></div>
  <div class="ime-zh">中</div>
  <div class="ime-dot">°,</div>
  <svg class="ime-i" width="20" height="20" viewBox="0 0 20 20"><circle cx="10" cy="10" r="8.500" fill="none" stroke="#1c6cb5" stroke-width="1.600"/><circle cx="7" cy="8" r="1.200" fill="#1c6cb5"/><circle cx="13" cy="8" r="1.200" fill="#1c6cb5"/><path d="M6 12c2 3 6 3 8 0" fill="none" stroke="#1c6cb5" stroke-width="1.300"/></svg>
  <svg class="ime-i" width="18" height="18" viewBox="0 0 18 18"><path d="M1 11L11 2l5 5-9 9H3z" fill="none" stroke="#1c6cb5" stroke-width="1.800"/></svg>
  <svg class="ime-i" width="14" height="20" viewBox="0 0 14 20"><path d="M4 1h6v11H4z" fill="#1c6cb5"/><path d="M1 9c0 8 12 8 12 0M7 15v4M3 19h8" fill="none" stroke="#1c6cb5" stroke-width="1.500"/></svg>
  <svg width="18" height="18" viewBox="0 0 18 18"><path d="M0 1h7v7H0zM0 10h7v7H0z" fill="#1c6cb5"/></svg>
</div>

<div class="ime-sm d-flex align-items-center">
  <div class="ime-sm-grip"></div>
  <div class="sg-logo sg-sm">S</div>
  <div class="updn"><b></b><u></u></div>
</div>

<svg class="cur-a" width="12" height="18" viewBox="0 0 12 18"><path d="M1 1v13l3-3 2 5 3-1-2-5h4z" fill="#fff" stroke="#666"/></svg>
<svg class="cur-b" width="22" height="32" viewBox="0 0 22 32"><path d="M1 1v25l6-6 4 10 5-2-4-10h9z" fill="#fff" stroke="#222" stroke-width="1.300"/></svg>

<script src="https://cdn.jsdelivr.net/npm/bootstrap@5.3.0/dist/js/bootstrap.bundle.min.js"></script>
<script>
    // rulers: same numbers on both sides of zero
    const top_ = document.getElementById('rulerTop');
    for (let n = -12; n <= 12; n++) {
        const c = document.createElement('div');
        c.className = 'rcell';
        c.textContent = Math.abs(n);
        top_.appendChild(c);
    }
    const left_ = document.getElementById('rulerLeft');
    for (let n = -9; n <= 9; n++) {
        const c = document.createElement('div');
        c.className = 'vcell';
        c.innerHTML = '<span>' + Math.abs(n) + '</span>';
        left_.appendChild(c);
    }
    // current slide's thumbnail is the slide itself, scaled down
    const copy = document.getElementById('mainSlide').cloneNode(true);
    copy.removeAttribute('id');
    document.getElementById('thumbNow').appendChild(copy);
</script>
</body>
</html>
